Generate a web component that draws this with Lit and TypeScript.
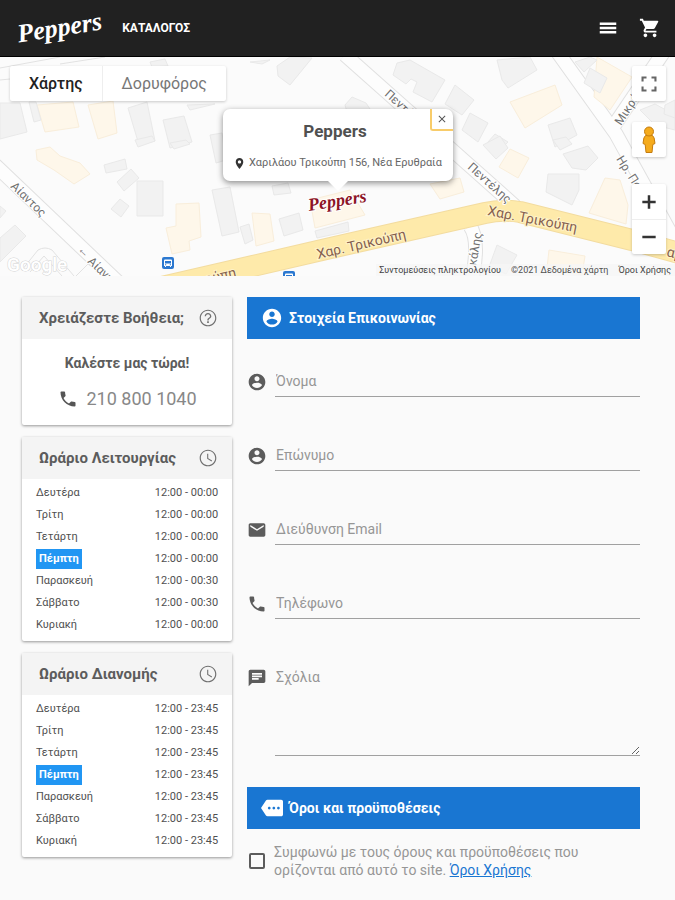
import { LitElement, html, svg, css } from "lit";
import { customElement } from "lit/decorators.js";

const ICONS = {
  menu: "M3 18h18v-2.6H3V18zm0-4.7h18v-2.6H3v2.6zM3 6v2.6h18V6H3z",
  cart: "M7 18c-1.100 0-1.990.9-1.990 2S5.900 22 7 22s2-.9 2-2-.9-2-2-2zM1 2v2h2l3.600 7.590-1.350 2.450c-.16.28-.25.61-.25.960 0 1.100.9 2 2 2h12v-2H7.420c-.14 0-.25-.11-.25-.25l.03-.12.9-1.630h7.450c.75 0 1.410-.41 1.750-1.030l3.580-6.490A1.003 1.003 0 0 0 20 4H5.210l-.94-2H1zm16 16c-1.100 0-1.990.9-1.990 2s.89 2 1.990 2 2-.9 2-2-.9-2-2-2z",
  account: "M12 2C6.480 2 2 6.480 2 12s4.480 10 10 10 10-4.480 10-10S17.520 2 12 2zm0 3c1.660 0 3 1.340 3 3s-1.340 3-3 3-3-1.340-3-3 1.340-3 3-3zm0 14.200c-2.500 0-4.710-1.280-6-3.220.03-1.990 4-3.080 6-3.080 1.990 0 5.970 1.090 6 3.080-1.290 1.940-3.500 3.220-6 3.220z",
  email: "M20 4H4c-1.100 0-1.990.9-1.990 2L2 18c0 1.100.9 2 2 2h16c1.100 0 2-.9 2-2V6c0-1.100-.9-2-2-2zm0 4l-8 5-8-5V6l8 5 8-5v2z",
  phone: "M6.620 10.790c1.440 2.830 3.760 5.140 6.590 6.590l2.200-2.200c.27-.27.67-.36 1.020-.24 1.120.37 2.330.57 3.570.57.55 0 1 .45 1 1V20c0 .55-.45 1-1 1-9.390 0-17-7.610-17-17 0-.55.45-1 1-1h3.500c.55 0 1 .45 1 1 0 1.250.2 2.450.57 3.570.11.35.03.74-.25 1.020l-2.200 2.200z",
  chat: "M20 2H4c-1.100 0-1.990.9-1.990 2L2 22l4-4h14c1.100 0 2-.9 2-2V4c0-1.100-.9-2-2-2zM6 9h12v2H6V9zm8 5H6v-2h8v2zm4-6H6V6h12v2z",
  more: "M22 3H7c-.69 0-1.230.35-1.590.88L0 12l5.410 8.110c.36.53.97.89 1.660.89H22c1.100 0 2-.9 2-2V5c0-1.100-.9-2-2-2zM9 13.500c-.83 0-1.500-.67-1.500-1.500s.67-1.500 1.500-1.500 1.500.67 1.500 1.500-.67 1.500-1.500 1.500zm5 0c-.83 0-1.500-.67-1.500-1.500s.67-1.500 1.500-1.500 1.500.67 1.500 1.500-.67 1.500-1.500 1.500zm5 0c-.83 0-1.500-.67-1.500-1.500s.67-1.500 1.500-1.500 1.500.67 1.500 1.500-.67 1.500-1.500 1.500z",
  help: "M11 18h2v-2h-2v2zm1-16C6.480 2 2 6.480 2 12s4.480 10 10 10 10-4.480 10-10S17.520 2 12 2zm0 18.600c-4.700 0-8.600-3.900-8.600-8.600S7.300 3.400 12 3.400s8.600 3.900 8.600 8.600-3.900 8.600-8.600 8.600zM12 6c-2.210 0-4 1.790-4 4h1.600c0-1.300 1.100-2.400 2.400-2.400s2.400 1.100 2.400 2.400c0 2-3.200 1.750-3.200 5h1.600c0-2.250 3.200-2.500 3.200-5 0-2.210-1.790-4-4-4z",
  clock: "M11.990 2C6.470 2 2 6.480 2 12s4.470 10 9.990 10C17.520 22 22 17.520 22 12S17.520 2 11.990 2zM12 20.600c-4.750 0-8.600-3.850-8.600-8.600S7.250 3.400 12 3.400s8.600 3.850 8.600 8.600-3.850 8.600-8.600 8.600zM12.300 7H11v6l5.250 3.150.65-1.130-4.600-2.720z",
  pin: "M12 2C8.130 2 5 5.130 5 9c0 5.250 7 13 7 13s7-7.750 7-13c0-3.870-3.130-7-7-7zm0 10c-1.660 0-3-1.340-3-3s1.340-3 3-3 3 1.340 3 3-1.340 3-3 3z",
  fullscreen: "M3 3h6v2.500H5.500V9H3zM15 3h6v6h-2.500V5.500H15zM3 15h2.500v3.500H9V21H3zM18.500 15H21v6h-6v-2.500h3.500z",
  plus: "M10.500 4h3v6.500H20v3h-6.500V20h-3v-6.500H4v-3h6.500z",
  minus: "M4 10.500h16v3H4z",
  close: "M19 6.400L17.600 5 12 10.600 6.400 5 5 6.400l5.600 5.600L5 17.600 6.400 19l5.600-5.600 5.600 5.600 1.400-1.400-5.600-5.600z",
};

const icon = (name: keyof typeof ICONS, cls = "") => html`
  <svg class="icon ${cls}" viewBox="0 0 24 24" aria-hidden="true"><path d=${ICONS[name]}></path></svg>`;

const DAYS = ["Δευτέρα", "Τρίτη", "Τετάρτη", "Πέμπτη", "Παρασκευή", "Σάββατο", "Κυριακή"];
const TODAY = "Πέμπτη";
const OPENING = ["12:00 - 00:00", "12:00 - 00:00", "12:00 - 00:00", "12:00 - 00:00", "12:00 - 00:30", "12:00 - 00:30", "12:00 - 00:00"];
const DELIVERY = DAYS.map(() => "12:00 - 23:45");

const FIELDS: { id: string; type: string; label: string; icon: keyof typeof ICONS }[] = [
  { id: "first", type: "text", label: "Όνομα", icon: "account" },
  { id: "last", type: "text", label: "Επώνυμο", icon: "account" },
  { id: "email", type: "email", label: "Διεύθυνση Email", icon: "email" },
  { id: "phone", type: "tel", label: "Τηλέφωνο", icon: "phone" },
];

const HOUSES = [
  "0,103 20,103 27,132 0,139",
  "29,102 36,102 41,120 34,122",
  "128,108 147,102 155,141 139,145",
  "163,120 184,116 192,142 170,148",
  "150,62 165,59 168,66 152,67",
  "187,105 215,104 190,110",
  "250,62 270,60 262,64",
  "277,66 290,57 312,58 290,85 278,76",
  "135,140 152,136 155,141 138,147",
  "170,143 186,140 190,144 174,149",
  "104,165 125,159 127,169 106,173",
  "117,182 131,169 139,178 124,191",
  "137,181 163,181 163,216 137,216",
  "111,209 120,199 129,206 121,217",
  "212,190 230,187 239,232 222,236",
  "240,227 249,224 253,240 245,244",
  "272,186 288,183 291,193 274,195",
  "279,219 299,213 303,230 284,236",
  "315,231 348,222 349,231 317,238",
  "0,238 15,225 26,236 0,262",
  "0,206 6,211 0,218",
  "210,135 222,133 226,160 216,163",
  "397,63 410,60 445,80 432,102 413,92 417,82 411,79 406,84 393,75",
  "497,60 530,57 537,70 508,88 502,80",
  "455,85 474,100 462,115 445,104",
  "470,113 488,123 478,142 462,130",
  "495,134 508,142 500,150 488,142",
  "548,125 570,118 577,135 555,147",
  "590,68 607,78 600,93 584,83",
  "575,62 590,57 597,60 584,72",
  "345,105 352,97 366,103 372,112 347,112",
  "483,145 500,136 508,148 496,159",
  "548,174 579,174 579,190 572,205 546,192",
  "563,154 588,146 598,158 586,170 572,168",
  "553,140 566,137 572,144 560,150",
  "497,245 517,255 506,274 489,267",
  "640,110 655,104 675,115 675,130 655,125",
  "665,105 675,100 675,118 664,114",
];
const SHOPS = [
  "37,105 73,102 79,127 45,132",
  "88,105 113,101 117,133 98,139",
  "36,150 50,147 60,156 80,163 90,174 74,184 54,170 37,160",
  "176,204 199,203 201,237 189,241 190,250 172,254 166,228 176,226",
  "252,213 270,214 274,241 256,246",
  "310,200 350,190 365,215 315,228",
  "510,102 555,85 562,105 525,128",
  "597,57 632,77 610,110 594,97",
  "510,149 529,158 518,178 499,167",
  "430,184 460,178 464,192 440,199",
  "605,178 620,180 628,205 626,224 589,213",
  "549,250 585,256 582,275 547,268",
];

@customElement("street-map")
export class StreetMap extends LitElement {
  static styles = css`
    :host { display: block; height: 100%; }
    .canvas { display: block; width: 100%; height: 100%; background: #fbfbfb; font-family: Roboto, sans-serif; }
    .house { fill: #f2f2f2; stroke: #e9e9e9; }
    .shop { fill: #fef7ea; stroke: #f9eedb; }
    .edge { fill: none; stroke: #e0e0e0; stroke-width: 15; }
    .street { fill: none; stroke: #fdfdfd; stroke-width: 13; }
    .main-edge { fill: none; stroke: #f3dca0; stroke-width: 22; stroke-linejoin: round; }
    .main { fill: none; stroke: #feeaaa; stroke-width: 20; stroke-linejoin: round; }
    .path { fill: none; stroke: #e2e2e2; }
    .name { font-size: 12px; fill: #707070; stroke: #fff; stroke-width: 2; paint-order: stroke; }
    .main-name { font-size: 14px; fill: #85604f; stroke: #fff3c8; stroke-width: 2; paint-order: stroke; }
    .google { font-size: 19px; font-weight: 500; fill: #fff; stroke: #d4d4d4; stroke-width: 1; paint-order: stroke; }
    .brand { font: italic bold 18px "Liberation Serif", serif; fill: #8d1426; stroke: #fff; stroke-width: 2; paint-order: stroke; }
    .stop { fill: #2b78d0; }
    .bus { fill: #fff; }
  `;

  private bus(x: number, y: number) {
    return svg`<g transform="translate(${x} ${y})">
      <rect class="stop" width="12" height="12" rx="2"></rect>
      <path class="bus" d="M3 2.500h6q1 0 1 1V9H9v1H8V9H4v1H3V9H2V3.500q0-1 1-1z"></path>
      <path class="stop" d="M3 4h6v2.500H3zM3 7.300h1.200v1H3zM7.800 7.300H9v1H7.800z"></path>
    </g>`;
  }

  render() {
    const streets = ["M-5 165L120 284", "M345 55L515 206", "M556 50L616 134L680 250", "M611 130L665 50", "M470 226Q480 240 472 280"];
    return html`
      <svg class="canvas" viewBox="0 57 675 219" preserveAspectRatio="xMidYMid slice" role="img" aria-label="Χάρτης">
        ${streets.map((d) => svg`<path class="edge" d=${d}></path>`)}
        ${streets.map((d) => svg`<path class="street" d=${d}></path>`)}
        ${SHOPS.map((p) => svg`<polygon class="shop" points=${p}></polygon>`)}
        ${HOUSES.map((p) => svg`<polygon class="house" points=${p}></polygon>`)}
        <path class="path" d="M0 68L60 57M0 80L10 79M60 64L105 57M22 270L38 250Q45 246 52 250L74 276M30 272L44 256L62 276M76 276L88 264L104 276"></path>
        <path class="main-edge" d="M140 292L335 247L485 213Q502 209 520 212L632 240L690 256"></path>
        <path class="main" d="M140 292L335 247L485 213Q502 209 520 212L632 240L690 256"></path>
        <text class="name" transform="translate(10 187) rotate(44)">Αίαντος</text>
        <text class="name" transform="translate(87 262) rotate(44)">Αίαντος</text>
        <text class="name" transform="translate(77 250) rotate(44)">←</text>
        <text class="name" transform="translate(384 95) rotate(42)">Πεντέλης</text>
        <text class="name" transform="translate(467 168) rotate(42)">Πεντέλης</text>
        <text class="name" transform="translate(621 126) rotate(-57)">Μικράς</text>
        <text class="name" transform="translate(616 159) rotate(58)">Ηρ. Πολ</text>
        <text class="name" transform="translate(476 266) rotate(-80)">κάλης</text>
        <text class="main-name" transform="translate(318 259) rotate(-13)">Χαρ. Τρικούπη</text>
        <text class="main-name" transform="translate(487 215) rotate(11)">Χαρ. Τρικούπη</text>
        <text class="main-name" transform="translate(206 284) rotate(-13)">ούπη</text>
        <text class="main-name" transform="translate(666 256) rotate(14)">αρ.</text>
        ${this.bus(162, 257)} ${this.bus(283, 271)}
        <text class="google" x="7" y="271">Google</text>
        <text class="brand" transform="translate(309 211) rotate(-9)">Peppers</text>
      </svg>`;
  }
}

@customElement("app-root")
export class AppRoot extends LitElement {
  static styles = css`
    :host { display: block; min-height: 100vh; background: #fafafa; color: #505050; font-family: Roboto, sans-serif; font-size: 14px; }
    * { box-sizing: border-box; }
    button { border: 0; padding: 0; background: none; font: inherit; color: inherit; cursor: pointer; }
    h2, h3, p { margin: 0; }
    .icon { display: block; flex: none; width: 20px; height: 20px; fill: currentColor; }

    .bar { display: flex; align-items: center; height: 57px; padding: 0 14px 0 17px; background: #212121; color: #fff; border-bottom: 1px solid #000; }
    .logo { color: #fff; text-decoration: none; font: italic bold 26px/30px "Liberation Serif", serif; transform: rotate(-9deg); }
    .catalog { margin-left: 20px; color: #fff; text-decoration: none; font-weight: 700; font-size: 12px; }
    .tools { display: flex; gap: 20px; margin-left: auto; }
    .tools .icon { width: 22px; height: 22px; }

    .map { position: relative; height: 219px; overflow: hidden; }
    .types { position: absolute; top: 9px; left: 10px; display: flex; height: 35px; background: #fff; border-radius: 2px; box-shadow: 0 1px 3px rgba(0, 0, 0, 0.2); font-size: 16px; color: #777; }
    .type { padding: 0 19px; }
    .type.on { color: #222; font-weight: 500; border-right: 1px solid #eee; }
    .ctl { position: absolute; right: 9px; width: 34px; display: grid; background: #fff; border-radius: 2px; box-shadow: 0 1px 3px rgba(0, 0, 0, 0.2); color: #666; }
    .ctl button { display: grid; place-items: center; height: 35px; }
    .full { top: 9px; }
    .peg { top: 65px; }
    .zoom { top: 127px; color: #333; }
    .zoom button + button { border-top: 1px solid #eee; }
    .man { width: 18px; height: 28px; fill: #f5ab1d; stroke: #c47c10; stroke-width: 1; }
    .info { position: absolute; top: 52px; left: 50%; width: 230px; height: 72px; margin-left: -115px; background: #fff; border-radius: 7px; box-shadow: 0 2px 6px rgba(0, 0, 0, 0.45); text-align: center; }
    .info::after { content: ""; position: absolute; top: 100%; left: 50%; border: solid transparent; border-width: 10px 10px 0; border-top-color: #fff; margin-left: -10px; }
    .info h2 { margin: 12px 5px 0 0; font-size: 17px; line-height: 20px; font-weight: 700; }
    .place { display: flex; align-items: center; justify-content: center; gap: 3px; margin-top: 14px; font-size: 11px; line-height: 16px; color: #666; }
    .place .icon { width: 13px; height: 13px; color: #333; }
    .info .close { position: absolute; top: 0; right: 0; width: 23px; height: 22px; display: grid; place-items: center; border: solid #f8cc6a; border-width: 0 0 2px 2px; border-radius: 0 7px 0 3px; color: #555; }
    .close .icon { width: 12px; height: 12px; }
    .legal { position: absolute; right: 0; bottom: 0; display: flex; gap: 10px; height: 12px; padding: 0 4px 0 3px; background: rgba(245, 245, 245, 0.75); font-size: 9px; line-height: 12px; }
    .legal a { color: #444; text-decoration: none; }

    .page { display: grid; grid-template-columns: 34% minmax(0, 1fr); gap: 15px; align-items: start; padding: 21px 35px 20px 22px; }
    .side { display: grid; gap: 12px; }
    .card { background: #fff; border-radius: 2px; box-shadow: 0 1px 3px rgba(0, 0, 0, 0.4); }
    .head { display: flex; align-items: center; justify-content: space-between; height: 42px; padding: 0 14px 0 17px; background: #f4f4f4; }
    .head h3, .call h3 { font-size: 14px; line-height: 20px; font-weight: 700; color: #5c5c5c; }
    .head h3 { font-size: 15px; }
    .head .icon { color: #707070; }
    .call { display: grid; justify-items: center; gap: 14px; padding: 14px 0 14px; }
    .number { display: flex; align-items: center; gap: 9px; font-size: 18px; line-height: 24px; color: #888; text-decoration: none; }
    .number .icon { color: #555; }
    .hours { width: 100%; border-spacing: 0; padding: 3px 14px 5px; font-size: 11px; }
    .hours th, .hours td { height: 22px; padding: 0; font-weight: 400; line-height: 20px; text-align: left; }
    .hours td { text-align: right; }
    .hours .today { display: inline-block; padding: 0 3px; background: #2196f3; color: #fff; font-weight: 700; }

    .banner { display: flex; align-items: center; gap: 6px; height: 42px; padding: 0 14px; background: #1976d2; color: #fff; font-size: 14px; font-weight: 700; }
    .banner .icon { width: 22px; height: 22px; }
    .field { display: flex; gap: 8px; padding: 26px 0 16px; color: #5c5c5c; }
    .field label { padding-top: 7px; }
    .field input, .field textarea { flex: 1; min-width: 0; height: 32px; margin: 0; padding: 0 1px; border: 0; border-bottom: 1px solid #a0a0a0; border-radius: 0; background: none; outline: 0; color: #333; font: 14px/20px Roboto, sans-serif; }
    .field textarea { height: 95px; padding-top: 6px; resize: vertical; }
    .field ::placeholder { color: #969696; opacity: 1; }
    .field.notes { padding-bottom: 31px; }
    .terms { display: flex; align-items: center; gap: 9px; padding: 14px 58px 0 2px; font-size: 14px; line-height: 18px; color: #969696; }
    .terms input { appearance: none; flex: none; width: 16px; height: 16px; margin: 0; border: 2px solid #5c5c5c; border-radius: 2px; }
    .terms input:checked { background: #1976d2; }
    .terms a { color: #1976d2; }
  `;

  private hours(title: string, times: string[]) {
    return html`
      <section class="card">
        <div class="head"><h3>${title}</h3>${icon("clock")}</div>
        <table class="hours" aria-label=${title}>
          <tbody>
            ${DAYS.map((day, i) => html`
              <tr>
                <th scope="row"><span class=${day === TODAY ? "today" : ""}>${day}</span></th>
                <td>${times[i]}</td>
              </tr>`)}
          </tbody>
        </table>
      </section>`;
  }

  render() {
    return html`
      <header class="bar">
        <a class="logo" href="#">Peppers</a>
        <a class="catalog" href="#catalog">ΚΑΤΑΛΟΓΟΣ</a>
        <div class="tools">
          <button aria-label="Μενού">${icon("menu")}</button>
          <button aria-label="Καλάθι">${icon("cart")}</button>
        </div>
      </header>

      <section class="map">
        <street-map></street-map>
        <div class="types">
          <button class="type on">Χάρτης</button>
          <button class="type">Δορυφόρος</button>
        </div>
        <div class="ctl full"><button aria-label="Πλήρης οθόνη">${icon("fullscreen")}</button></div>
        <div class="ctl peg">
          <button aria-label="Street View">
            <svg class="man" viewBox="0 0 18 28" aria-hidden="true">
              <path d="M5.500 9.500h7q2 1 2.500 8l-2.200 1-.8 8H6l-.8-8-2.200-1q.5-7 2.500-8z"></path>
              <circle cx="9" cy="5.500" r="4.500"></circle>
            </svg>
          </button>
        </div>
        <div class="ctl zoom">
          <button aria-label="Μεγέθυνση">${icon("plus")}</button>
          <button aria-label="Σμίκρυνση">${icon("minus")}</button>
        </div>
        <div class="info">
          <h2>Peppers</h2>
          <p class="place">${icon("pin")}<span>Χαριλάου Τρικούπη 156, Νέα Ερυθραία</span></p>
          <button class="close" aria-label="Κλείσιμο">${icon("close")}</button>
        </div>
        <div class="legal">
          <a href="#keys">Συντομεύσεις πληκτρολογίου</a>
          <span>©2021 Δεδομένα χάρτη</span>
          <a href="#maps-terms">Όροι Χρήσης</a>
        </div>
      </section>

      <main class="page">
        <aside class="side">
          <section class="card">
            <div class="head"><h3>Χρειάζεστε Βοήθεια;</h3>${icon("help")}</div>
            <div class="call">
              <h3>Καλέστε μας τώρα!</h3>
              <a class="number" href="tel:2108001040">${icon("phone")}<span>210 800 1040</span></a>
            </div>
          </section>
          ${this.hours("Ωράριο Λειτουργίας", OPENING)}
          ${this.hours("Ωράριο Διανομής", DELIVERY)}
        </aside>

        <form>
          <h2 class="banner">${icon("account")}<span>Στοιχεία Επικοινωνίας</span></h2>
          ${FIELDS.map((f) => html`
            <div class="field">
              <label for=${f.id} aria-label=${f.label}>${icon(f.icon)}</label>
              <input id=${f.id} type=${f.type} placeholder=${f.label} />
            </div>`)}
          <div class="field notes">
            <label for="notes" aria-label="Σχόλια">${icon("chat")}</label>
            <textarea id="notes" placeholder="Σχόλια"></textarea>
          </div>
          <h2 class="banner">${icon("more")}<span>Όροι και προϋποθέσεις</span></h2>
          <div class="terms">
            <input id="agree" type="checkbox" />
            <label for="agree">Συμφωνώ με τους όρους και προϋποθέσεις που ορίζονται από αυτό το site. <a href="#terms">Όροι Χρήσης</a></label>
          </div>
        </form>
      </main>`;
  }
}
